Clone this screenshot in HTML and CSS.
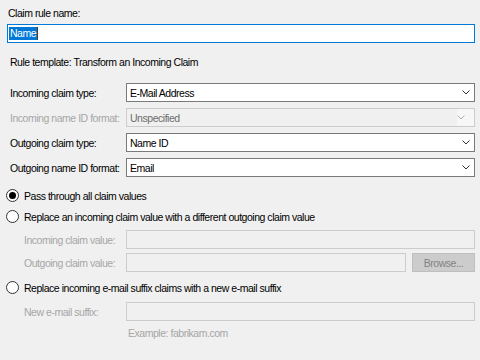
FILE: index.html
```html
<!DOCTYPE html>
<html lang="en">

<head>
  <meta charset="UTF-8">
  <title>Edit Rule</title>
  <link rel="stylesheet" href="styles.css">
</head>

<body>
  <div class="page">
    <div class="caption">Claim rule name:</div>
    <div class="name-box"><span class="sel">Name</span></div>

    <div class="template">Rule template: Transform an Incoming Claim</div>

    <div class="rows">
      <div class="row">
        <span class="lbl">Incoming claim type:</span>
        <div class="combo"><span>E-Mail Address</span>
          <svg class="chev" viewBox="0 0 8 5"><path d="M0.5 0.5 L4 4 L7.5 0.5" /></svg>
        </div>
      </div>
      <div class="row">
        <span class="lbl off">Incoming name ID format:</span>
        <div class="combo dis"><span>Unspecified</span>
          <div class="drop"><svg class="chev" viewBox="0 0 8 5"><path d="M0.5 0.5 L4 4 L7.5 0.5" /></svg></div>
        </div>
      </div>
      <div class="row">
        <span class="lbl">Outgoing claim type:</span>
        <div class="combo"><span>Name ID</span>
          <svg class="chev" viewBox="0 0 8 5"><path d="M0.5 0.5 L4 4 L7.5 0.5" /></svg>
        </div>
      </div>
      <div class="row">
        <span class="lbl">Outgoing name ID format:</span>
        <div class="combo"><span>Email</span>
          <svg class="chev" viewBox="0 0 8 5"><path d="M0.5 0.5 L4 4 L7.5 0.5" /></svg>
        </div>
      </div>
    </div>

    <div class="radio first"><span class="dot on"></span>Pass through all claim values</div>
    <div class="radio"><span class="dot"></span>Replace an incoming claim value with a different outgoing claim value</div>

    <div class="sub first">
      <span class="lbl off">Incoming claim value:</span>
      <div class="field"></div>
    </div>
    <div class="sub">
      <span class="lbl off">Outgoing claim value:</span>
      <div class="field"></div>
      <div class="browse">Browse...</div>
    </div>

    <div class="radio third"><span class="dot"></span>Replace incoming e-mail suffix claims with a new e-mail suffix</div>
    <div class="sub">
      <span class="lbl off">New e-mail suffix:</span>
      <div class="field"></div>
    </div>
    <div class="example">Example: fabrikam.com</div>
  </div>
</body>

</html>
```

FILE: styles.css
```css
body {
  margin: 0;
  background-color: #f0f0f0;
  font-family: "Liberation Sans", Arial, sans-serif;
  font-size: 10.5px;
  letter-spacing: -0.47px;
  color: #000;
  white-space: nowrap;
}

.page {
  padding: 4px 5px 0 7px;
}

.caption {
  line-height: 18px;
  padding-left: 1px;
}

.name-box {
  margin-top: 2px;
  height: 17px;
  border: 1px solid #0078d7;
  background-color: #fff;
  display: flex;
  align-items: center;
  padding-left: 1px;
}

.sel {
  background-color: #0078d7;
  color: #fff;
  line-height: 13px;
  padding: 0 1px;
  border-right: 1px solid #5a3a1a;
}

.template {
  margin-top: 11px;
  line-height: 16px;
  padding-left: 3px;
}

.rows {
  margin-top: 13px;
  display: flex;
  flex-direction: column;
  gap: 6px;
}

.row,
.sub {
  display: flex;
  align-items: center;
  height: 19px;
}

.row {
  padding-left: 3px;
}

.row .lbl {
  width: 116px;
  flex-shrink: 0;
}

.sub {
  padding-left: 17px;
  margin-top: 4px;
}

.sub.first {
  margin-top: 3px;
}

.sub .lbl {
  width: 102px;
  flex-shrink: 0;
}

.off {
  color: #a6a6a6;
}

.combo {
  flex: 1;
  height: 17px;
  border: 1px solid #7a7a7a;
  background-color: #fff;
  display: flex;
  align-items: center;
  justify-content: space-between;
  padding-left: 3px;
}

.combo.dis {
  border-color: #cccccc;
  background-color: #f0f0f0;
  color: #6d6d6d;
  padding-right: 0;
}

.drop {
  width: 17px;
  height: 17px;
  background-color: #f7f7f7;
  display: flex;
  align-items: center;
}

.chev {
  width: 8px;
  height: 5px;
  margin-right: 4px;
  fill: none;
  stroke: #333;
  stroke-width: 1;
}

.dis .chev {
  stroke: #b0b0b0;
}

.radio {
  display: flex;
  align-items: center;
  height: 21px;
}

.radio.first {
  margin-top: 8px;
}

.radio.third {
  margin-top: 5px;
}

.dot {
  width: 11px;
  height: 11px;
  border: 1px solid #333;
  border-radius: 50%;
  background-color: #fff;
  margin: 0 5px 0 -1px;
  display: flex;
  align-items: center;
  justify-content: center;
}

.dot.on::after {
  content: "";
  width: 7px;
  height: 7px;
  border-radius: 50%;
  background-color: #000;
}

.field {
  flex: 1;
  height: 17px;
  border: 1px solid #cccccc;
  background-color: #f0f0f0;
}

.browse {
  width: 63px;
  height: 19px;
  margin-left: 6px;
  box-sizing: border-box;
  border: 1px solid #bfbfbf;
  background-color: #cccccc;
  color: #838383;
  display: flex;
  align-items: center;
  justify-content: center;
}

.example {
  margin-top: 4px;
  line-height: 16px;
  padding-left: 121px;
  color: #a6a6a6;
}
```
